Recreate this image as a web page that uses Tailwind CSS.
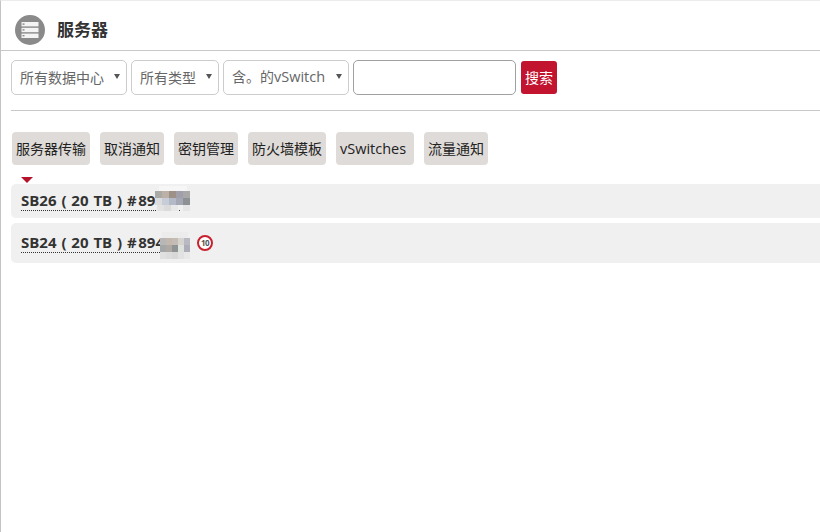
<!DOCTYPE html>
<html lang="zh">
<head>
    <meta charset="UTF-8">
    <title>服务器</title>
    <script src="https://cdn.jsdelivr.net/npm/@tailwindcss/browser@4"></script>
</head>
<body class="bg-white overflow-hidden">
    <div class="h-[532px] w-[820px] border-l border-t border-l-[#c4c4c4] border-t-[#ececec] font-['Open_Sans','Noto_Sans_CJK_SC',sans-serif] text-[#333]">
        <!-- Page title -->
        <div class="flex h-[50px] items-center border-b border-[#c8c8c8] pl-[14px] pt-[8px]">
            <div class="flex h-[30px] w-[30px] items-center justify-center rounded-full bg-[#8a8a8a]">
                <svg width="20" height="18" viewBox="0 0 20 18" fill="none">
                    <rect x="1.5" y="1" width="17" height="4.4" fill="#f4f4f4"/>
                    <rect x="1.5" y="6.8" width="17" height="4.4" fill="#f4f4f4"/>
                    <rect x="1.5" y="12.6" width="17" height="4.4" fill="#f4f4f4"/>
                    <rect x="2.5" y="2.4" width="2" height="1.4" fill="#8a8a8a"/>
                    <rect x="2.5" y="8.2" width="2" height="1.4" fill="#8a8a8a"/>
                    <rect x="2.5" y="14" width="2" height="1.4" fill="#8a8a8a"/>
                </svg>
            </div>
            <h1 class="ml-[12px] text-[17px] font-bold text-[#333]">服务器</h1>
        </div>

        <!-- Filters -->
        <div class="ml-[10px] flex h-[60px] items-center gap-[4px] border-b border-[#c8c8c8] pb-[7px]">
            <div class="relative flex h-[35px] w-[116px] items-center rounded-[5px] border border-[#ccc] pl-[8px] text-[14px] text-[#666]">
                所有数据中心
                <span class="absolute right-[6px] top-[13px] h-0 w-0 border-x-[3px] border-t-[5px] border-x-transparent border-t-[#555]"></span>
            </div>
            <div class="relative flex h-[35px] w-[88px] items-center rounded-[5px] border border-[#ccc] pl-[8px] text-[14px] text-[#666]">
                所有类型
                <span class="absolute right-[6px] top-[13px] h-0 w-0 border-x-[3px] border-t-[5px] border-x-transparent border-t-[#555]"></span>
            </div>
            <div class="relative flex h-[35px] w-[126px] items-center rounded-[5px] border border-[#ccc] pl-[8px] text-[14px] text-[#666]">
                <span>含。的<span class="text-[14.5px]">vSwitch</span></span>
                <span class="absolute right-[6px] top-[13px] h-0 w-0 border-x-[3px] border-t-[5px] border-x-transparent border-t-[#555]"></span>
            </div>
            <input type="text" class="h-[35px] w-[163px] rounded-[5px] border border-[#a0a0a0] bg-white">
            <button class="ml-[1px] h-[33px] w-[36px] rounded-[3px] bg-[#c2132f] text-[14px] text-white">搜索</button>
        </div>

        <!-- Action buttons -->
        <div class="ml-[11px] mt-[21px] flex gap-[10px] text-[14px] text-[#222]">
            <div class="flex h-[33px] w-[78px] items-center justify-center rounded-[4px] bg-[#dfdbd8]">服务器传输</div>
            <div class="flex h-[33px] w-[64px] items-center justify-center rounded-[4px] bg-[#dfdbd8]">取消通知</div>
            <div class="flex h-[33px] w-[64px] items-center justify-center rounded-[4px] bg-[#dfdbd8]">密钥管理</div>
            <div class="flex h-[33px] w-[78px] items-center justify-center rounded-[4px] bg-[#dfdbd8]">防火墙模板</div>
            <div class="flex h-[33px] w-[78px] items-center rounded-[4px] bg-[#dfdbd8] pl-[4px] text-[14.5px]">vSwitches</div>
            <div class="flex h-[33px] w-[64px] items-center justify-center rounded-[4px] bg-[#dfdbd8]">流量通知</div>
        </div>

        <!-- Server list -->
        <div class="ml-[20px] mt-[12px] h-0 w-0 border-x-[6px] border-t-[6px] border-x-transparent border-t-[#b5122c]"></div>
        <div class="ml-[10px] mt-px flex h-[34px] items-center rounded-l-[5px] bg-[#f0f0f0] pl-[10px]">
            <div class="relative">
                <span class="block w-[159px] border-b border-dotted border-[#333] text-[15px] font-bold leading-[19px] [word-spacing:1px]">SB26 ( 20 TB ) #&#8202;89</span>
                <svg class="absolute left-[134px] top-[-5px]" width="36" height="29" viewBox="0 0 36 29">
                    <rect x="4" y="0" width="28" height="5" fill="#f6f6f6"/>
                    <rect x="0" y="5" width="7" height="7" fill="#a9a9a6"/><rect x="7" y="5" width="7" height="7" fill="#bdb1a7"/><rect x="14" y="5" width="7" height="7" fill="#9d9189"/><rect x="21" y="5" width="7" height="7" fill="#a09faa"/><rect x="28" y="5" width="7" height="7" fill="#a8a8a8"/>
                    <rect x="0" y="12" width="7" height="7" fill="#dcdcdc"/><rect x="7" y="12" width="7" height="7" fill="#c6ccd8"/><rect x="14" y="12" width="7" height="7" fill="#b3b9c6"/><rect x="21" y="12" width="7" height="7" fill="#a5a8b4"/><rect x="28" y="12" width="7" height="7" fill="#8e9194"/>
                    <rect x="2" y="19" width="7" height="6" fill="#e2e2e2"/><rect x="9" y="19" width="7" height="6" fill="#dadada"/><rect x="16" y="19" width="7" height="6" fill="#e8e8e8"/><rect x="28" y="19" width="7" height="6" fill="#e6e6e6"/>
                </svg>
            </div>
        </div>
        <div class="ml-[10px] mt-[5px] flex h-[40px] items-center rounded-l-[5px] bg-[#f0f0f0] pl-[10px]">
            <div class="relative">
                <span class="block w-[169px] border-b border-dotted border-[#333] text-[15px] font-bold leading-[19px] [word-spacing:1px]">SB24 ( 20 TB ) #&#8202;894</span>
                <svg class="absolute left-[139px] top-[-1px]" width="30" height="27" viewBox="0 0 30 27">
                    <rect x="2" y="0" width="26" height="6" fill="#ececec"/>
                    <rect x="0" y="6" width="6" height="7" fill="#b7b7b7"/><rect x="6" y="6" width="6" height="7" fill="#c2b8ad"/><rect x="12" y="6" width="6" height="7" fill="#c4bcb5"/><rect x="18" y="6" width="6" height="7" fill="#d6d4ce"/><rect x="24" y="6" width="6" height="7" fill="#b9b9c4"/>
                    <rect x="0" y="13" width="6" height="7" fill="#a3a7a7"/><rect x="6" y="13" width="6" height="7" fill="#aeaaa3"/><rect x="12" y="13" width="6" height="7" fill="#8f9393"/><rect x="18" y="13" width="6" height="7" fill="#dde2dd"/><rect x="24" y="13" width="6" height="7" fill="#aeaeba"/>
                    <rect x="0" y="20" width="6" height="7" fill="#e0e0e0"/><rect x="6" y="20" width="6" height="7" fill="#dcdcdc"/><rect x="12" y="20" width="6" height="7" fill="#d8d8d8"/><rect x="18" y="20" width="6" height="7" fill="#e2e2e2"/><rect x="24" y="20" width="6" height="7" fill="#e8e8e8"/>
                </svg>
            </div>
            <div class="ml-[7px] flex h-[16px] w-[16px] items-center justify-center rounded-full border-[2.5px] border-[#c8202f] bg-white text-[8px] font-bold leading-none tracking-[-0.5px] text-[#555]">10</div>
        </div>
    </div>
</body>
</html>
